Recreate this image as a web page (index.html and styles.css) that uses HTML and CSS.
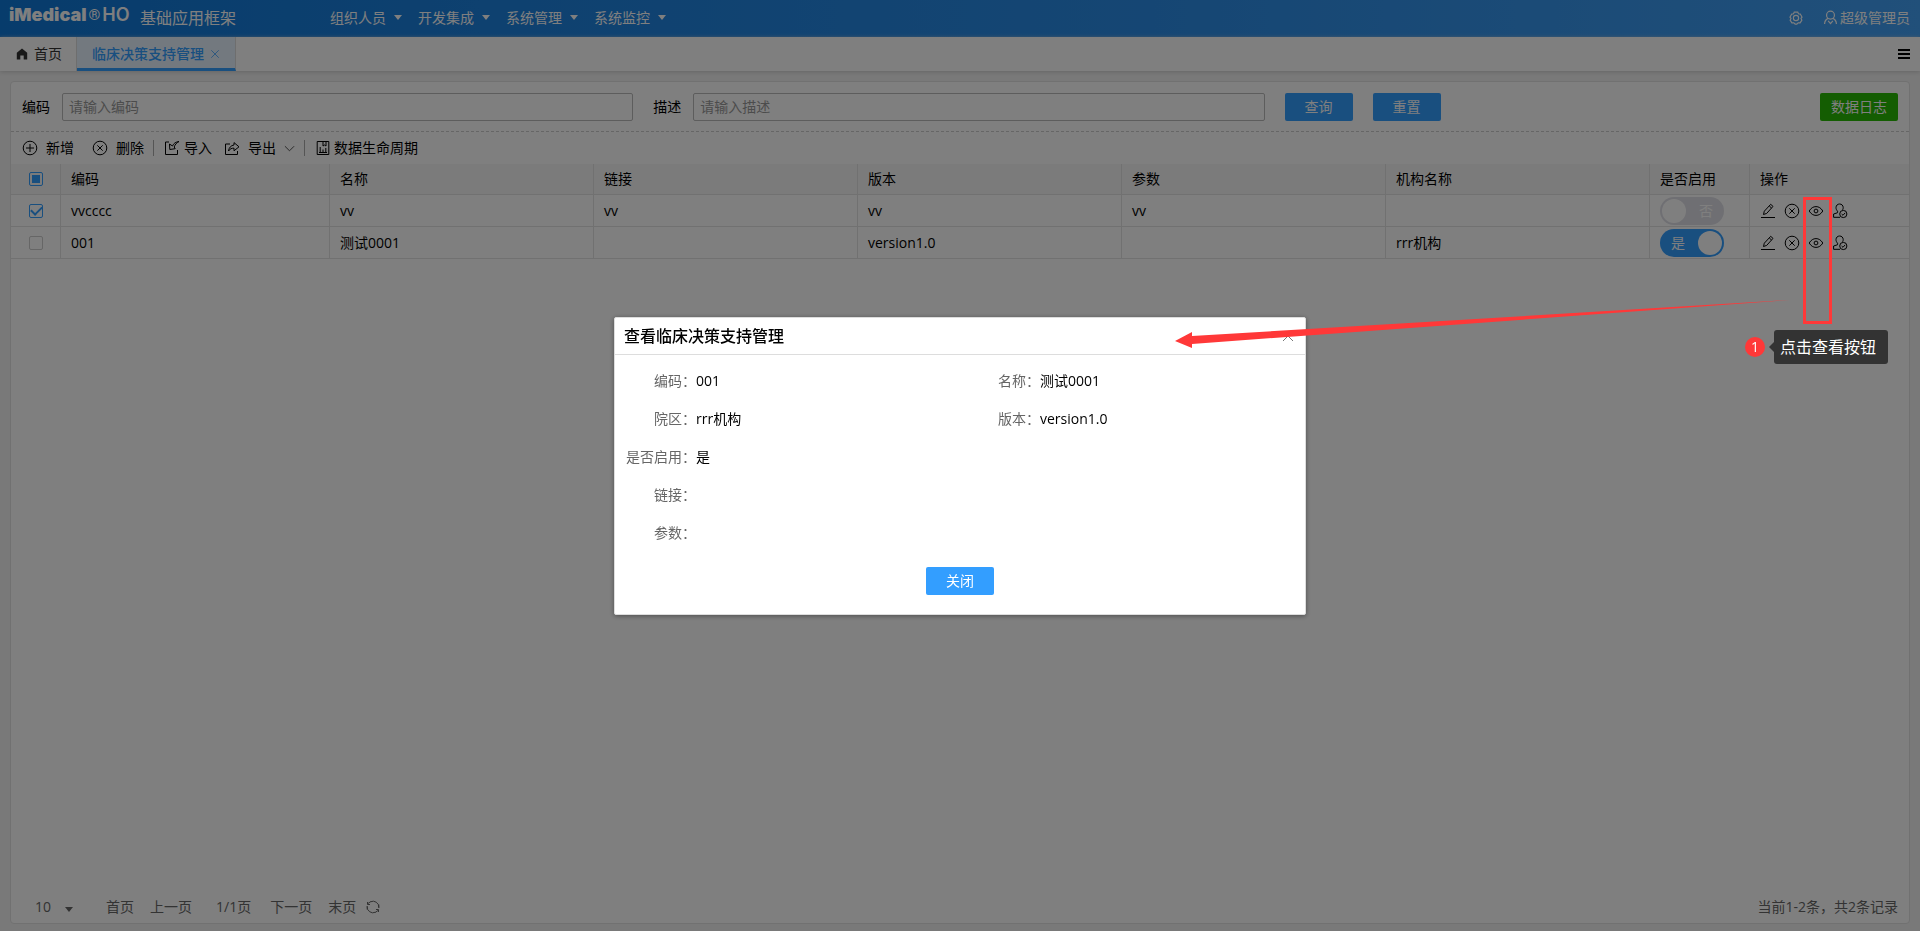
FILE: index.html
```html
<!DOCTYPE html>
<html lang="zh-CN">
<head>
<meta charset="utf-8">
<title>临床决策支持管理</title>
<link rel="stylesheet" href="styles.css">
</head>
<body>
<svg class="defs" aria-hidden="true">
  <symbol id="i-edit" viewBox="0 0 16 16"><path d="M3.5 11.5 4.3 8.2 10.7 1.3 13 3.4 6.7 10.4 3.5 11.5M9.3 3 11.5 5M1 14.5H15"/></symbol>
  <symbol id="i-cancel" viewBox="0 0 16 16"><circle cx="8" cy="8" r="6.800"/><path d="m5.300 5.300 5.400 5.400m0-5.400-5.400 5.400"/></symbol>
  <symbol id="i-add" viewBox="0 0 16 16"><circle cx="8" cy="8" r="6.800"/><path d="M8 4v8M4 8h8"/></symbol>
  <symbol id="i-eye" viewBox="0 0 16 16"><path d="M1.200 8C3 5 5.300 3.600 8 3.600S13 5 14.800 8C13 11 10.700 12.400 8 12.400S3 11 1.200 8Z"/><circle cx="8" cy="8" r="1.900"/></symbol>
  <symbol id="i-userok" viewBox="0 0 16 16"><path d="M5.600 8.200C4.400 7 4 5.800 4 4.600 4 2.400 5.600 1 7.600 1s3.600 1.400 3.600 3.600c0 .8-.2 1.600-.6 2.200M5.600 8.200 5.400 9.800 1.600 11v3.300H8"/><circle cx="11.300" cy="11" r="3.600"/><path d="m9.600 11 1.400 1.300 2.100-2.400"/></symbol>
  <symbol id="i-close" viewBox="0 0 16 16"><path d="m3 3 10 10M13 3 3 13"/></symbol>
</svg>

<header class="topbar">
  <div class="brand"><span class="brand-name">iMedical</span><span class="brand-reg">®</span><span class="brand-ho">HO</span></div>
  <span class="app-name">基础应用框架</span>
  <nav class="menu">
    <button type="button">组织人员<i class="caret"></i></button>
    <button type="button">开发集成<i class="caret"></i></button>
    <button type="button">系统管理<i class="caret"></i></button>
    <button type="button">系统监控<i class="caret"></i></button>
  </nav>
  <div class="account">
    <button type="button" aria-label="设置"><svg class="gear" viewBox="0 0 16 16"><path d="M6 1.300h4l.8 1.900 2.100.3 2 3.500-1.200 1.500 1 2-2 3-2.200-.1L9 15H7l-1.500-1.600-2.200.1-2-3 1-2L1.100 7l2-3.500 2.100-.3Z"/><circle cx="8" cy="8" r="3"/></svg></button>
    <button type="button"><svg class="person" viewBox="0 0 16 16"><circle cx="8" cy="5.500" r="4.200"/><path d="M5.500 9C3 10 1.800 12 1.700 15M10.500 9c2.500 1 3.700 3 3.800 6M5.500 11.500 8 14.500l2.500-3"/></svg>超级管理员</button>
  </div>
</header>

<div class="tabs">
  <a class="tab" href="#home"><svg class="home" viewBox="0 0 12 12"><path d="M6 .5 .8 4.700V11.500H4.300V7.500H7.700V11.500H11.200V4.700Z"/></svg>首页</a>
  <a class="tab tab-active" href="#cds">临床决策支持管理<svg class="icon tab-close"><use href="#i-close"/></svg></a>
  <button class="tabs-more" type="button" aria-label="更多"><i></i><i></i><i></i></button>
</div>

<main class="panel">
  <form class="search">
    <label for="code">编码</label><input id="code" type="text" placeholder="请输入编码">
    <label for="desc">描述</label><input id="desc" type="text" placeholder="请输入描述">
    <button class="btn" type="button">查询</button>
    <button class="btn" type="button">重置</button>
    <span class="spacer"></span>
    <button class="btn btn-green" type="button">数据日志</button>
  </form>

  <div class="toolbar">
    <button type="button" class="tool-wide"><svg class="icon"><use href="#i-add"/></svg>新增</button>
    <button type="button" class="tool-wide"><svg class="icon"><use href="#i-cancel"/></svg>删除</button>
    <i class="divider"></i>
    <button type="button"><svg class="icon" viewBox="0 0 16 16"><path d="M5 2H1.500v12.500h12V10M15 1.500C11.500 2 9.500 3.500 8.500 6L5.500 4l.3 5.500 5.400-.8-1-1.700c.8-2.500 2.300-4.200 4.800-5.500Z"/></svg>导入</button>
    <button type="button" class="tool-wide tool-export"><svg class="icon" viewBox="0 0 16 16"><path d="M6 4H1.500v10.500h12V11M4.500 11C5 7.500 7 5.400 10 5V2.600l5 4.200-5 4V8.200C7.500 8 6 9 4.500 11Z"/></svg>导出<svg class="chevron" viewBox="0 0 12 12"><path d="m1 3.500 5 5 5-5"/></svg></button>
    <i class="divider"></i>
    <button type="button" class="tool-life"><svg class="icon" viewBox="0 0 16 16"><path d="M2.200 1.500h11.600v13H2.200ZM5.200 7v5.500M8 9.500v3M10.800 8v4.500M8 1.500V6l1.500-1L11 6V1.500M4 12.500h8"/></svg>数据生命周期</button>
  </div>

  <table class="grid">
    <colgroup><col class="c-check"><col class="c-code"><col><col><col><col><col><col class="c-on"><col class="c-act"></colgroup>
    <thead>
      <tr><th class="check"><input class="some" type="checkbox" aria-label="全选"></th><th>编码</th><th>名称</th><th>链接</th><th>版本</th><th>参数</th><th>机构名称</th><th>是否启用</th><th>操作</th></tr>
    </thead>
    <tbody>
      <tr>
        <td class="check"><input type="checkbox" aria-label="选择 vvcccc" checked></td>
        <td>vvcccc</td><td>vv</td><td>vv</td><td>vv</td><td>vv</td><td></td>
        <td><label class="switch"><input type="checkbox" aria-label="是否启用"><span>否</span></label></td>
        <td><div class="actions">
          <button type="button" aria-label="编辑"><svg class="icon"><use href="#i-edit"/></svg></button>
          <button type="button" aria-label="删除"><svg class="icon"><use href="#i-cancel"/></svg></button>
          <button type="button" aria-label="查看"><svg class="icon"><use href="#i-eye"/></svg></button>
          <button type="button" aria-label="授权"><svg class="icon"><use href="#i-userok"/></svg></button>
        </div></td>
      </tr>
      <tr>
        <td class="check"><input type="checkbox" aria-label="选择 001"></td>
        <td>001</td><td>测试0001</td><td></td><td>version1.0</td><td></td><td>rrr机构</td>
        <td><label class="switch switch-on"><input type="checkbox" aria-label="是否启用" checked><span>是</span></label></td>
        <td><div class="actions">
          <button type="button" aria-label="编辑"><svg class="icon"><use href="#i-edit"/></svg></button>
          <button type="button" aria-label="删除"><svg class="icon"><use href="#i-cancel"/></svg></button>
          <button type="button" aria-label="查看"><svg class="icon"><use href="#i-eye"/></svg></button>
          <button type="button" aria-label="授权"><svg class="icon"><use href="#i-userok"/></svg></button>
        </div></td>
      </tr>
    </tbody>
  </table>

  <footer class="pager">
    <div class="page-size"><select aria-label="每页条数"><option>10</option></select><i class="caret"></i></div>
    <button type="button">首页</button>
    <button type="button">上一页</button>
    <span class="page-now">1/1页</span>
    <button type="button">下一页</button>
    <button type="button">末页</button>
    <button class="reload" type="button" aria-label="刷新"><svg viewBox="0 0 14 14"><path d="M4.500 1.800A5.800 5.800 0 0 1 12.800 7.500M9.500 12.200A5.800 5.800 0 0 1 1.200 6.500M1.200 9.500V6M12.800 4.500V8M2 3.500 4.800 1.500M12 10.500 9.200 12.500M1.500 2v2.500H4M12.500 12V9.500H10"/></svg></button>
    <span class="total">当前1-2条，共2条记录</span>
  </footer>
</main>

<div class="mask">
  <section class="dialog" role="dialog" aria-labelledby="dlg-title">
    <header class="dialog-head">
      <h2 id="dlg-title">查看临床决策支持管理</h2>
      <button type="button" aria-label="关闭窗口"><svg class="icon"><use href="#i-close"/></svg></button>
    </header>
    <dl class="detail">
      <div><dt>编码：</dt><dd>001</dd></div>
      <div><dt>名称：</dt><dd>测试0001</dd></div>
      <div><dt>院区：</dt><dd>rrr机构</dd></div>
      <div><dt>版本：</dt><dd>version1.0</dd></div>
      <div class="wide"><dt>是否启用：</dt><dd>是</dd></div>
      <div class="wide"><dt>链接：</dt><dd></dd></div>
      <div class="wide"><dt>参数：</dt><dd></dd></div>
    </dl>
    <div class="dialog-foot"><button class="btn" type="button">关闭</button></div>
  </section>

  <div class="highlight"></div>
  <svg class="arrow" viewBox="0 0 616 50"><path d="M0 42 17 33V37L615 1 17 45V49Z"/></svg>
  <div class="hint"><span class="hint-no">1</span><span class="hint-text">点击查看按钮</span></div>
</div>
</body>
</html>
```
FILE: styles.css
```css
* { box-sizing: border-box; }

body {
  margin: 0;
  min-height: 100vh;
  display: flex;
  flex-direction: column;
  background: #f2f2f2;
  color: #000;
  font: 14px/20px "Open Sans", "Noto Sans CJK SC", sans-serif;
}

button {
  font: inherit;
  color: inherit;
  background: none;
  border: 0;
  padding: 0;
  display: flex;
  align-items: center;
}

.defs { display: none; }

.icon {
  width: 16px;
  height: 16px;
  flex: none;
  fill: none;
  stroke: currentColor;
  stroke-width: 1;
}

.caret {
  border: 4px solid transparent;
  border-top: 5px solid currentColor;
  border-bottom: 0;
}

/* Top bar */
.topbar {
  height: 37px;
  flex: none;
  display: flex;
  align-items: center;
  padding: 0 10px 2px 9px;
  color: #fff;
  background: linear-gradient(90deg, #0f78d8 0%, #1c82e0 25%, #2b8de8 60%, #42a0f5 100%);
}

.brand {
  display: flex;
  align-items: center;
  width: 131px;
  padding-bottom: 6px;
  font-family: Inter, sans-serif;
  font-size: 18px;
  font-weight: 900;
}
.brand-reg { padding-left: 2px; font-family: Roboto, sans-serif; font-size: 15px; font-weight: 400; }
.brand-ho { padding-left: 2px; font-weight: 600; }

.app-name { width: 190px; font-size: 16px; }

.menu { display: flex; gap: 16px; }
.menu button { gap: 8px; }

.account { display: flex; gap: 20px; margin-left: auto; }
.account button { gap: 2px; }
.account svg { fill: none; stroke: currentColor; stroke-width: 1.3; }
.gear { width: 14px; height: 14px; }
.person { width: 15px; height: 15px; }

/* Tabs */
.tabs {
  height: 34px;
  flex: none;
  display: flex;
  background: #fff;
  box-shadow: 0 1px 4px #ccc;
}
.tab {
  display: flex;
  align-items: center;
  gap: 6px;
  width: 77px;
  padding-left: 16px;
  color: #333;
  text-decoration: none;
  border-right: 1px solid #ddd;
}
.home { width: 12px; height: 12px; fill: #333; }
.tab-active {
  width: 159px;
  padding: 3px 0 0 15px;
  gap: 5px;
  color: #339eff;
  font-weight: 500;
  background: #e7f3ff;
  border-bottom: 3px solid #339eff;
}
.tab-close { width: 12px; height: 12px; }
.tabs-more {
  flex-direction: column;
  justify-content: center;
  gap: 2px;
  margin-left: auto;
  padding-right: 10px;
}
.tabs-more i { width: 12px; height: 2px; background: #000; }

/* Main panel */
.panel {
  flex: 1;
  display: flex;
  flex-direction: column;
  margin: 10px 10px 7px;
  background: #fff;
  border: 1px solid #e2e2e2;
  border-radius: 4px;
}

.search {
  display: flex;
  align-items: center;
  height: 50px;
  padding: 0 11px;
  border-bottom: 1px dashed #ccc;
}
.search label { padding-right: 12px; flex: none; }
.search input {
  flex: 3;
  min-width: 0;
  height: 28px;
  margin-right: 20px;
  padding: 0 6px;
  font: inherit;
  border: 1px solid #bbb;
  border-radius: 2px;
}
.search input::placeholder { color: #999; }
.spacer { flex: 2; padding: 0 4px; }

.btn {
  flex: none;
  justify-content: center;
  min-width: 68px;
  height: 28px;
  color: #fff;
  background: #339eff;
  border-radius: 2px;
}
.search .btn + .btn { margin-left: 20px; }
.btn-green { min-width: 78px; background: #28ba05; }

.toolbar {
  display: flex;
  align-items: center;
  height: 32px;
  padding-left: 11px;
}
.toolbar button { gap: 4px; }
.toolbar .tool-wide { gap: 8px; margin-right: 18px; }
.toolbar .tool-wide + .divider { margin-left: -9px; }
.toolbar .tool-export { margin: 0 18px 0 12px; }
.toolbar .tool-life { gap: 3px; }
.divider { width: 1px; height: 16px; margin-right: 10px; background: #aaa; }
.chevron { width: 11px; height: 11px; fill: none; stroke: #444; }

/* Data table */
.grid {
  width: 100%;
  table-layout: fixed;
  border-collapse: separate;
  border-spacing: 0;
}
.c-check { width: 50px; }
.c-code { width: 269px; }
.c-on { width: 100px; }
.c-act { width: 159px; }
.grid th, .grid td {
  height: 32px;
  padding: 0 10px;
  text-align: left;
  font-weight: 400;
  border: 0 solid #e2e2e2;
  border-width: 0 1px 1px 0;
}
.grid th { height: 31px; background: #f7f7f7; }
.grid th:last-child, .grid td:last-child { border-right: 0; }
.grid .check { padding: 0 0 0 18px; }

.check input {
  appearance: none;
  display: grid;
  place-items: center;
  width: 14px;
  height: 14px;
  margin: 0;
  border: 1px solid #ccc;
  border-radius: 2px;
}
.check .some, .check input:checked { border-color: #339eff; }
.check .some::after {
  content: "";
  width: 8px;
  height: 8px;
  background: #339eff;
}
.check input:checked::after {
  content: "";
  width: 9px;
  height: 5px;
  margin-bottom: 2px;
  border: solid #339eff;
  border-width: 0 0 2px 2px;
  transform: rotate(-45deg);
}

.switch {
  display: flex;
  align-items: center;
  width: 64px;
  height: 28px;
  padding: 0 2px;
  color: #fff;
  background: #dfdfe6;
  border-radius: 14px;
}
.switch input {
  appearance: none;
  width: 24px;
  height: 24px;
  margin: 0;
  background: #fff;
  border-radius: 50%;
}
.switch span { flex: 1; padding-left: 4px; text-align: center; }
.switch-on { flex-direction: row-reverse; background: #339eff; }
.switch-on span { padding: 0 4px 0 0; }

.actions { display: flex; gap: 8px; }

/* Pagination */
.pager {
  display: flex;
  align-items: center;
  gap: 16px;
  margin-top: auto;
  height: 32px;
  padding: 0 11px 0 24px;
  color: #666;
}
.page-size { display: flex; align-items: center; width: 55px; gap: 10px; }
.page-size select {
  appearance: none;
  width: 20px;
  padding: 0;
  font: inherit;
  color: inherit;
  background: none;
  border: 0;
}
.page-size .caret { margin-top: 4px; }
.page-now { padding: 0 3px 0 8px; }
.reload { margin-left: -6px; }
.reload svg { width: 14px; height: 14px; fill: none; stroke: currentColor; }
.total { margin-left: auto; }

/* Mask and dialog */
.mask {
  position: fixed;
  inset: 0;
  display: flex;
  align-items: center;
  justify-content: center;
  background: rgba(0, 0, 0, .5);
}
.dialog {
  width: 692px;
  max-width: 100%;
  background: #fff;
  border: 1px solid #ddd;
  border-radius: 2px;
  box-shadow: 0 1px 5px rgba(0, 0, 0, .4);
}
.dialog-head {
  display: flex;
  align-items: center;
  justify-content: space-between;
  height: 37px;
  padding: 0 9px;
  border-bottom: 1px solid #ddd;
}
.dialog-head h2 { margin: 0; font-size: 16px; font-weight: 500; }
.dialog-head .icon { color: #777; }
.detail {
  display: grid;
  grid-template-columns: 1fr 1fr;
  margin: 0;
  padding: 7px 2px 0 0;
}
.detail div { display: flex; align-items: center; height: 38px; }
.detail .wide { grid-column: 1 / -1; }
.detail dt { width: 81px; text-align: right; color: #666; }
.detail dd { margin: 0; }
.dialog-foot {
  display: flex;
  justify-content: center;
  padding: 15px 0 19px;
}

/* Annotations over the page */
.highlight {
  position: absolute;
  top: 197px;
  right: 88px;
  width: 29px;
  height: 127px;
  border: 3px solid #ff3838;
}
.arrow {
  position: absolute;
  top: 299px;
  right: 129px;
  width: 616px;
  height: 50px;
  fill: #ff3838;
}
.hint {
  position: absolute;
  top: 330px;
  right: 32px;
  display: flex;
  align-items: center;
  gap: 9px;
  color: #fff;
}
.hint-no {
  width: 20px;
  height: 20px;
  text-align: center;
  background: #ff3838;
  border-radius: 50%;
}
.hint-text {
  position: relative;
  width: 114px;
  padding: 5px 6px;
  font-size: 16px;
  line-height: 24px;
  background: #333;
  border-radius: 3px;
}
.hint-text::before {
  content: "";
  position: absolute;
  left: -5px;
  top: 12px;
  border: 5px solid transparent;
  border-right-color: #333;
  border-left: 0;
}
```
